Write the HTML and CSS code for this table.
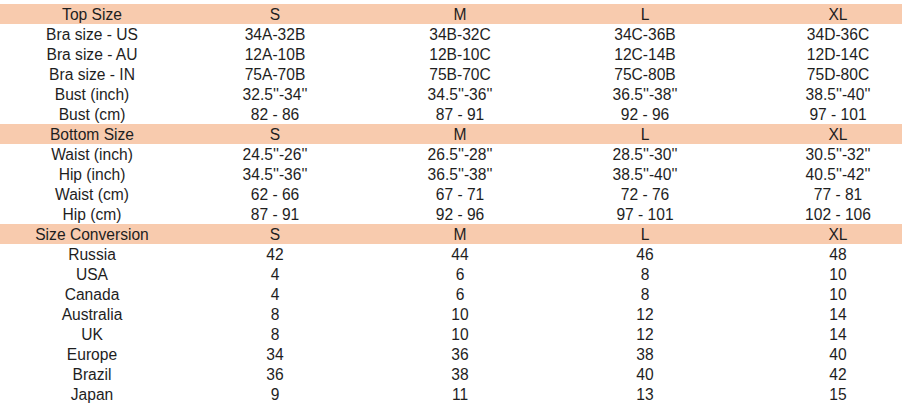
FILE: index.html
```html
<!DOCTYPE html>
<html>
<head>
<meta charset="utf-8">
<link rel="stylesheet" href="styles.css">
</head>
<body>
<div class="chart">
  <div class="row head"><span>Top Size</span><span>S</span><span>M</span><span>L</span><span>XL</span></div>
  <div class="row"><span>Bra size - US</span><span>34A-32B</span><span>34B-32C</span><span>34C-36B</span><span>34D-36C</span></div>
  <div class="row"><span>Bra size - AU</span><span>12A-10B</span><span>12B-10C</span><span>12C-14B</span><span>12D-14C</span></div>
  <div class="row"><span>Bra size - IN</span><span>75A-70B</span><span>75B-70C</span><span>75C-80B</span><span>75D-80C</span></div>
  <div class="row"><span>Bust (inch)</span><span>32.5''-34''</span><span>34.5''-36''</span><span>36.5''-38''</span><span>38.5''-40''</span></div>
  <div class="row"><span>Bust (cm)</span><span>82 - 86</span><span>87 - 91</span><span>92 - 96</span><span>97 - 101</span></div>
  <div class="row head"><span>Bottom Size</span><span>S</span><span>M</span><span>L</span><span>XL</span></div>
  <div class="row"><span>Waist (inch)</span><span>24.5''-26''</span><span>26.5''-28''</span><span>28.5''-30''</span><span>30.5''-32''</span></div>
  <div class="row"><span>Hip (inch)</span><span>34.5''-36''</span><span>36.5''-38''</span><span>38.5''-40''</span><span>40.5''-42''</span></div>
  <div class="row"><span>Waist (cm)</span><span>62 - 66</span><span>67 - 71</span><span>72 - 76</span><span>77 - 81</span></div>
  <div class="row"><span>Hip (cm)</span><span>87 - 91</span><span>92 - 96</span><span>97 - 101</span><span>102 - 106</span></div>
  <div class="row head"><span>Size Conversion</span><span>S</span><span>M</span><span>L</span><span>XL</span></div>
  <div class="row"><span>Russia</span><span>42</span><span>44</span><span>46</span><span>48</span></div>
  <div class="row"><span>USA</span><span>4</span><span>6</span><span>8</span><span>10</span></div>
  <div class="row"><span>Canada</span><span>4</span><span>6</span><span>8</span><span>10</span></div>
  <div class="row"><span>Australia</span><span>8</span><span>10</span><span>12</span><span>14</span></div>
  <div class="row"><span>UK</span><span>8</span><span>10</span><span>12</span><span>14</span></div>
  <div class="row"><span>Europe</span><span>34</span><span>36</span><span>38</span><span>40</span></div>
  <div class="row"><span>Brazil</span><span>36</span><span>38</span><span>40</span><span>42</span></div>
  <div class="row"><span>Japan</span><span>9</span><span>11</span><span>13</span><span>15</span></div>
</div>
</body>
</html>
```
FILE: styles.css
```css
html, body {
  margin: 0;
  padding: 0;
  background: #ffffff;
  overflow: hidden;
}
body {
  width: 902px;
  height: 410px;
  font-family: "Liberation Sans", Arial, sans-serif;
  font-size: 15.6px;
  color: #1e1e1e;
}
.chart {
  padding-top: 4px;
  width: 902px;
  overflow: hidden;
}
.row {
  display: grid;
  grid-template-columns: 184px 182px 188px 182px 204px;
  height: 20px;
  line-height: 20px;
  white-space: nowrap;
}
.row span {
  text-align: center;
  padding-top: 1px;
}
.row.head {
  background: #f8cbae;
}
```
